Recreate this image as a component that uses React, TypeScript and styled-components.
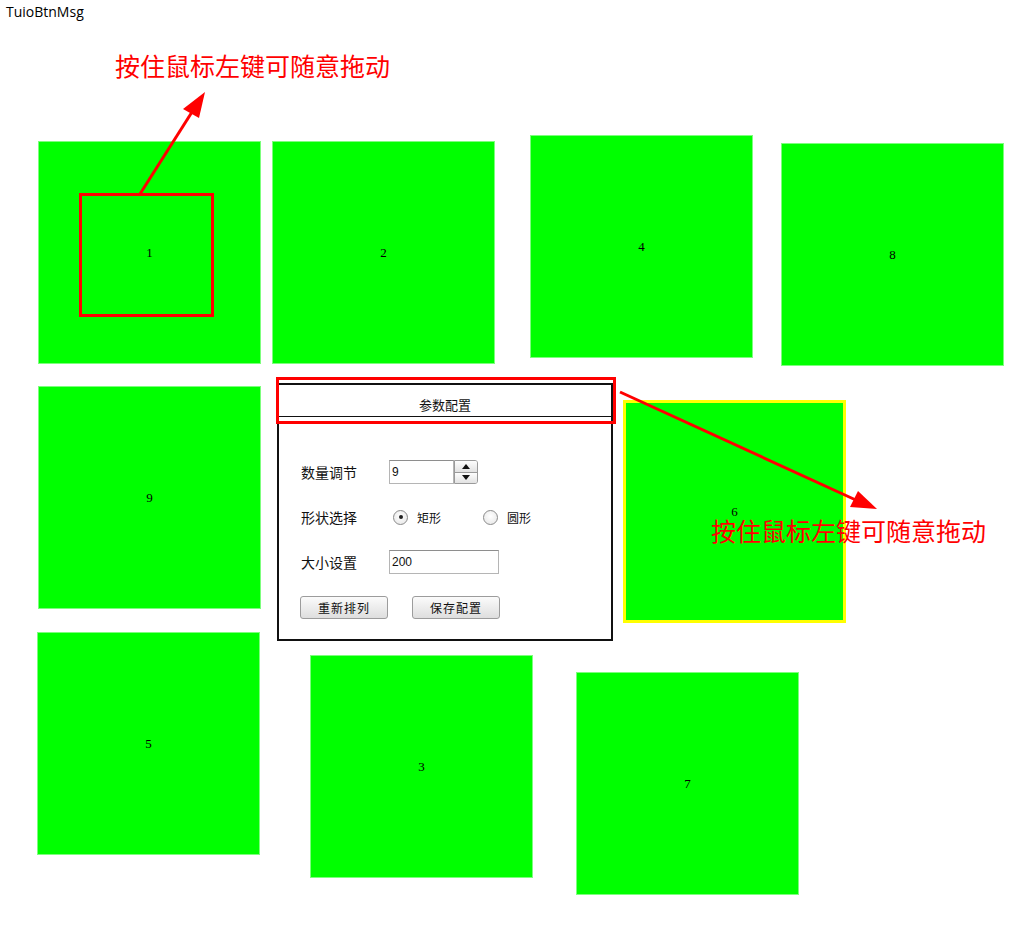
import React from 'react';
import styled, { createGlobalStyle } from 'styled-components';

const squares = [
  { id: 1, x: 38, y: 141 },
  { id: 2, x: 272, y: 141 },
  { id: 4, x: 530, y: 135 },
  { id: 8, x: 781, y: 143 },
  { id: 9, x: 38, y: 386 },
  { id: 6, x: 623, y: 400, active: true },
  { id: 5, x: 37, y: 632 },
  { id: 3, x: 310, y: 655 },
  { id: 7, x: 576, y: 672 },
];

const HINT = '按住鼠标左键可随意拖动';

const GlobalStyle = createGlobalStyle`
  html, body {
    margin: 0;
    padding: 0;
    background: #fff;
  }
  body {
    font-family: "Noto Sans", "Noto Sans CJK SC", sans-serif;
  }
`;

const Canvas = styled.div`
  position: relative;
  width: 1024px;
  height: 928px;
  overflow: hidden;
  background: #fff;
`;

const WindowTitle = styled.div`
  position: absolute;
  left: 6px;
  top: 2px;
  font-family: "Open Sans", "Noto Sans", sans-serif;
  font-size: 14px;
  color: #000;
`;

const Square = styled.div<{ $x: number; $y: number; $active?: boolean }>`
  position: absolute;
  left: ${(p) => p.$x}px;
  top: ${(p) => p.$y}px;
  width: 223px;
  height: 223px;
  box-sizing: border-box;
  background: #00ff00;
  border: ${(p) => (p.$active ? '3px solid #ffff00' : '1px solid #7dff7d')};
  display: flex;
  align-items: center;
  justify-content: center;
  font-family: "Liberation Serif", serif;
  font-size: 13px;
  color: #000;
`;

const Highlight = styled.div<{ $x: number; $y: number; $w: number; $h: number }>`
  position: absolute;
  left: ${(p) => p.$x}px;
  top: ${(p) => p.$y}px;
  width: ${(p) => p.$w}px;
  height: ${(p) => p.$h}px;
  box-sizing: border-box;
  border: 3px solid #ff0000;
  pointer-events: none;
`;

const Hint = styled.div<{ $x: number; $y: number }>`
  position: absolute;
  left: ${(p) => p.$x}px;
  top: ${(p) => p.$y}px;
  font-family: "Noto Sans CJK SC", sans-serif;
  font-size: 25px;
  line-height: 30px;
  color: #ff0000;
  white-space: nowrap;
`;

const Arrows = styled.svg`
  position: absolute;
  left: 0;
  top: 0;
  pointer-events: none;
`;

const Panel = styled.div`
  position: absolute;
  left: 277px;
  top: 383px;
  width: 336px;
  height: 258px;
  box-sizing: border-box;
  border: 2px solid #111;
  background: #fff;
  display: flex;
  flex-direction: column;
  font-family: "Noto Sans CJK SC", sans-serif;
  font-size: 13px;
  color: #111;
`;

const PanelHeader = styled.div`
  height: 32px;
  border-bottom: 1px solid #111;
  display: flex;
  align-items: flex-end;
  justify-content: center;
  padding-bottom: 1px;
  box-sizing: border-box;
  line-height: 20px;
`;

const PanelBody = styled.div`
  padding: 43px 0 0 22px;
  display: flex;
  flex-direction: column;
  gap: 21px;
`;

const Row = styled.div`
  display: flex;
  align-items: center;
  height: 24px;
`;

const Label = styled.span`
  width: 88px;
  flex: none;
  font-size: 14px;
`;

const Field = styled.div<{ $w: number }>`
  width: ${(p) => p.$w}px;
  height: 24px;
  box-sizing: border-box;
  border: 1px solid #b5b5b5;
  border-top-color: #8e8e8e;
  background: #fff;
  display: flex;
  align-items: center;
  padding-left: 2px;
  font-family: "Liberation Sans", sans-serif;
  font-size: 12px;
`;

const Spin = styled.div`
  display: flex;
  height: 24px;
`;

const SpinButtons = styled.div`
  width: 24px;
  height: 24px;
  box-sizing: border-box;
  border: 1px solid #9a9a9a;
  border-radius: 0 3px 3px 0;
  display: flex;
  flex-direction: column;
  overflow: hidden;
`;

const SpinButton = styled.div`
  flex: 1;
  display: flex;
  align-items: center;
  justify-content: center;
  background: linear-gradient(#fdfdfd, #e2e2e2);
  & + & {
    border-top: 1px solid #9a9a9a;
  }
`;

const Radio = styled.span<{ $gap: number }>`
  display: flex;
  align-items: center;
  gap: 9px;
  margin-left: ${(p) => p.$gap}px;
  font-size: 12px;
`;

const RadioCircle = styled.span<{ $checked?: boolean }>`
  width: 15px;
  height: 15px;
  box-sizing: border-box;
  border-radius: 50%;
  border: 1px solid #8a8a8a;
  background: radial-gradient(circle at 50% 40%, #fff, #e4e4e4);
  display: flex;
  align-items: center;
  justify-content: center;
  &::after {
    content: '';
    width: 4px;
    height: 4px;
    border-radius: 50%;
    background: ${(p) => (p.$checked ? '#222' : 'transparent')};
  }
`;

const ButtonRow = styled.div`
  display: flex;
  gap: 24px;
  margin-top: 1px;
  margin-left: -1px;
`;

const Button = styled.button`
  width: 88px;
  height: 23px;
  box-sizing: border-box;
  border: 1px solid #9c9c9c;
  border-radius: 3px;
  background: linear-gradient(#fbfbfb, #dedede);
  font-family: "Noto Sans CJK SC", sans-serif;
  font-size: 12px;
  letter-spacing: 1px;
  color: #111;
  padding: 0;
`;

const Tri = ({ up }: { up?: boolean }) => (
  <svg width="8" height="5" viewBox="0 0 8 5">
    <path d={up ? 'M0 5 L4 0 L8 5 Z' : 'M0 0 L4 5 L8 0 Z'} fill="#111" />
  </svg>
);

export default function App() {
  return (
    <>
      <GlobalStyle />
      <Canvas>
        <WindowTitle>TuioBtnMsg</WindowTitle>

        {squares.map((s) => (
          <Square key={s.id} $x={s.x} $y={s.y} $active={s.active}>
            {s.id}
          </Square>
        ))}

        <Panel>
          <PanelHeader>参数配置</PanelHeader>
          <PanelBody>
            <Row>
              <Label>数量调节</Label>
              <Spin>
                <Field $w={65}>9</Field>
                <SpinButtons>
                  <SpinButton>
                    <Tri up />
                  </SpinButton>
                  <SpinButton>
                    <Tri />
                  </SpinButton>
                </SpinButtons>
              </Spin>
            </Row>
            <Row>
              <Label>形状选择</Label>
              <Radio $gap={4}>
                <RadioCircle $checked />
                矩形
              </Radio>
              <Radio $gap={42}>
                <RadioCircle />
                圆形
              </Radio>
            </Row>
            <Row>
              <Label>大小设置</Label>
              <Field $w={110}>200</Field>
            </Row>
            <ButtonRow>
              <Button>重新排列</Button>
              <Button>保存配置</Button>
            </ButtonRow>
          </PanelBody>
        </Panel>

        <Highlight $x={79} $y={193} $w={135} $h={124} />
        <Highlight $x={276} $y={377} $w={340} $h={47} />

        <Hint $x={115} $y={50}>{HINT}</Hint>
        <Hint $x={711} $y={515}>{HINT}</Hint>

        <Arrows width="1024" height="928" viewBox="0 0 1024 928">
          <line x1="140" y1="194" x2="192" y2="112" stroke="#ff0000" strokeWidth="3" />
          <polygon points="205,92 183,109 199,118" fill="#ff0000" />
          <line x1="620" y1="392" x2="858" y2="501" stroke="#ff0000" strokeWidth="3" />
          <polygon points="877,509 858,491 850,507" fill="#ff0000" />
        </Arrows>
      </Canvas>
    </>
  );
}
